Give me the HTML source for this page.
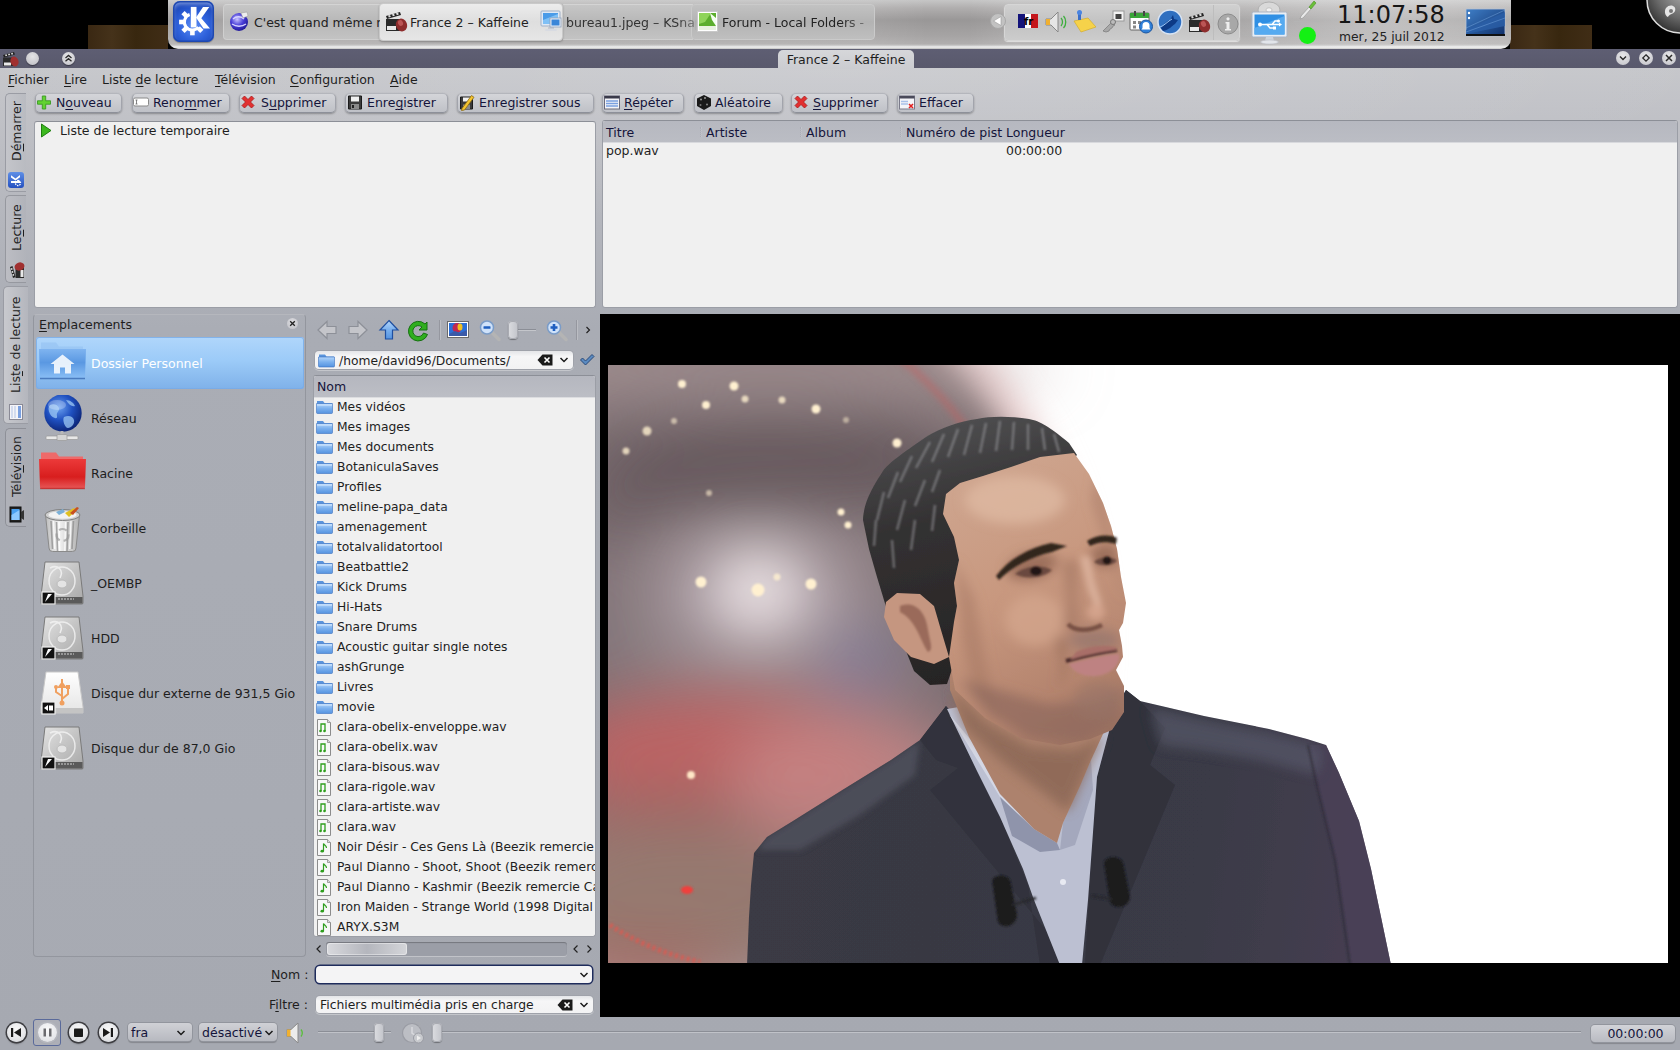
<!DOCTYPE html>
<html lang="fr">
<head>
<meta charset="utf-8">
<title>France 2 – Kaffeine</title>
<style>
html,body{margin:0;padding:0}
body{width:1680px;height:1050px;position:relative;overflow:hidden;background:#000;
 font-family:"DejaVu Sans","Liberation Sans",sans-serif;font-size:12.5px;color:#1e1e1e;line-height:16px}
.a{position:absolute}
u{text-decoration:underline;text-underline-offset:2px;text-decoration-thickness:1px}
#win{left:0;top:68px;width:1680px;height:982px;
 background:radial-gradient(ellipse 900px 160px at 840px 0,rgba(255,255,255,.12),rgba(255,255,255,0)),linear-gradient(#c6c7cb 0,#c1c2c7 40px,#b3b5bc 160px,#a9acb4 260px,#a6a9b1 100%)}
#title{left:0;top:49px;width:1680px;height:19px;background:linear-gradient(#5e5e73,#59596c)}
.wood{background:linear-gradient(90deg,#3a2813,#45321a 30%,#38270f 60%,#402d16)}
#panel{left:168px;top:0;width:1343px;height:49px;border-radius:0 0 10px 10px;
 background:radial-gradient(ellipse 160px 40px at 1220px 20px,rgba(255,255,255,.28),rgba(255,255,255,0)),linear-gradient(90deg,rgba(255,255,255,.12) 0,rgba(255,255,255,.08) 700px,rgba(255,255,255,0) 760px,rgba(255,255,255,0) 800px,rgba(255,255,255,.1) 850px,rgba(255,255,255,.18) 100%),linear-gradient(#c6c6c6 0,#b0aeae 8px,#999797 20px,#a6a4a4 36px,#b0aeae 44px,#c8c8c8 45.500px,#f0f0f0 47px,#d8d8d8 48px,#b8b8b8 49px)}
.btn{height:18px;border-radius:5px;border:1px solid #a2a4ac;border-top-color:#b4b6bc;border-bottom-color:#8d9099;
 background:linear-gradient(#d4d5d9,#bfc1c7);box-shadow:0 1px 2px rgba(0,0,0,.3);color:#14143a}
.btn span{position:absolute;top:1px;white-space:nowrap}
.view{background:#f0f0f0;border:1px solid #9b9ea6;border-top-color:#8c8f97;border-radius:3px;box-sizing:border-box}
.row{position:absolute;left:0;white-space:nowrap;height:20px;line-height:20px;font-size:12.3px}
.vt{position:absolute;white-space:nowrap;transform-origin:0 0;transform:rotate(-90deg);font-size:12.5px;color:#1e1e1e}
</style>
</head>
<body>
<!-- DESKTOP TOP -->
<div class="a wood" style="left:88px;top:25px;width:80px;height:24px"></div>
<div class="a wood" style="left:1510px;top:25px;width:82px;height:24px"></div>
<div id="panel" class="a"></div>

<!-- PANEL CONTENT -->
<div class="a" style="left:173px;top:1px;width:41px;height:41px;border-radius:7px;background:radial-gradient(ellipse 60% 55% at 50% 62%,#5f8ff4,#2f62dc 60%,#1f4cc0);box-shadow:inset 0 0 0 1.500px #1e48b0,inset 0 3px 4px rgba(255,255,255,.45),0 1px 1px rgba(0,0,0,.3)">
<svg class="a" style="left:0;top:0" width="41" height="41" viewBox="0 0 41 41"><g fill="#fff"><path d="M17.800 5.900h5.700v20.500h-5.700z"/><path d="M23 16.500L30 6h6.300l-8 11.200 8.700 10.300h-6.500z"/><path d="M16.660 13.480A8 8 0 1 0 25.530 26.140" fill="none" stroke="#fff" stroke-width="3"/><g transform="translate(19.400 21)"><rect x="-2.300" y="-13.300" width="4.600" height="5" transform="rotate(-45)"/><rect x="-2.300" y="-13.300" width="4.600" height="5" transform="rotate(-90)"/><rect x="-2.300" y="-13.300" width="4.600" height="5" transform="rotate(-135)"/><rect x="-2.300" y="-13.300" width="4.600" height="5" transform="rotate(180)"/><rect x="-2.300" y="-13.300" width="4.600" height="5" transform="rotate(135)"/></g></g></svg></div>
<div class="a" style="left:223px;top:4px;width:159px;height:36px;border-radius:4px 0 0 4px;background:linear-gradient(#c6c6c6,#b7b7b7 50%,#c3c3c3);border:1px solid #cfcfcf;border-top-color:#d4d4d4;box-sizing:border-box"></div>
<div class="a" style="left:563px;top:4px;width:130px;height:36px;background:linear-gradient(#c6c6c6,#b7b7b7 50%,#c3c3c3);border:1px solid #cfcfcf;border-top-color:#d4d4d4;border-left:0;box-sizing:border-box"></div>
<div class="a" style="left:691px;top:4px;width:184px;height:36px;border-radius:4px;background:linear-gradient(#c2c2c2,#b3b3b3 50%,#bfbfbf);border:1px solid #cacaca;box-sizing:border-box"></div>
<div class="a" style="left:379px;top:3px;width:184px;height:38px;border-radius:4px;background:linear-gradient(#ececec,#dedede 50%,#e6e6e6);border:1px solid #c9c9c9;box-sizing:border-box;box-shadow:0 1px 2px rgba(0,0,0,.25)"></div>
<!-- task icons -->
<svg class="a" style="left:229px;top:10px" width="22" height="22" viewBox="0 0 22 22"><defs><radialGradient id="gl" cx=".4" cy=".35" r=".7"><stop offset="0" stop-color="#c9c4ff"/><stop offset=".5" stop-color="#4a3fd8"/><stop offset="1" stop-color="#1d1690"/></radialGradient></defs><circle cx="10" cy="12" r="9" fill="url(#gl)"/><path d="M4 9c3-3 8-3 11 0M3 14c4 3 10 3 14 0" stroke="#d8d4ff" stroke-width="1.300" fill="none"/><path d="M12 3l6-1 1 4-5 2z" fill="#eee" stroke="#999" stroke-width=".5"/></svg>
<svg class="a" style="left:384px;top:9px" width="24" height="24" viewBox="0 0 24 24"><path d="M2 7l14-4 1 3-14 4z" fill="#222"/><path d="M4 6.500l2-.600.800 2-2 .600zM8 5.300l2-.600.800 2-2 .600zM12 4.200l2-.600.800 2-2 .600z" fill="#ddd"/><rect x="2" y="10" width="15" height="12" fill="#2a2a2a"/><rect x="3" y="17" width="9" height="4" fill="#e8e8e8"/><ellipse cx="17.500" cy="16" rx="5.500" ry="6.500" transform="rotate(-20 17.500 16)" fill="#8e2d2d"/><ellipse cx="16.500" cy="14" rx="2.500" ry="3" transform="rotate(-20 16.500 14)" fill="#b55"/></svg>
<svg class="a" style="left:540px;top:9px" width="23" height="24" viewBox="0 0 23 24"><rect x="1" y="2" width="19" height="15" rx="1" fill="#dfe8f4" stroke="#9fb0c8"/><rect x="3" y="4" width="15" height="11" fill="#4a9be8"/><path d="M3 11l15-6v10H3z" fill="#7fc0f6"/><rect x="8" y="17" width="6" height="3" fill="#c8ccd4"/><rect x="5" y="20" width="12" height="2" rx="1" fill="#d8dbe2"/><rect x="10" y="9" width="11" height="9" fill="#e8eef8" stroke="#8fa0b8" stroke-width=".8"/><rect x="11.500" y="10.500" width="8" height="6" fill="#3b86d8"/></svg>
<svg class="a" style="left:697px;top:11px" width="21" height="21" viewBox="0 0 21 21"><rect x=".5" y=".5" width="20" height="20" fill="#fff" stroke="#c8c8c8"/><rect x="2" y="2" width="17" height="13" fill="#5cae2e"/><path d="M2 2h12l-6 9-6 2z" fill="#8fd45a"/><path d="M13 2l6 5v8l-4-6z" fill="#f4fff0"/><rect x="2" y="15" width="17" height="4" fill="#e8f2e0"/></svg>
<div class="a" style="left:254px;top:15px;width:126px;overflow:hidden;white-space:nowrap;color:#222">C'est quand même mieux</div>
<div class="a" style="left:410px;top:15px;white-space:nowrap;color:#222">France 2 – Kaffeine</div>
<div class="a" style="left:566px;top:15px;width:130px;overflow:hidden;white-space:nowrap;color:#333;-webkit-mask-image:linear-gradient(90deg,#000 85%,rgba(0,0,0,.4))">bureau1.jpeg – KSnapshot</div>
<div class="a" style="left:722px;top:15px;width:148px;overflow:hidden;white-space:nowrap;color:#222;-webkit-mask-image:linear-gradient(90deg,#000 80%,rgba(0,0,0,.3))">Forum - Local Folders - </div>
<!-- systray -->
<div class="a" style="left:1004px;top:4px;width:236px;height:37px;border-radius:4px;background:linear-gradient(#d0d0d0,#c2c2c2 50%,#cccccc);border:1px solid #d6d6d6;box-sizing:border-box;box-shadow:0 1px 1px rgba(255,255,255,.6)"></div>
<div class="a" style="left:1213px;top:5px;width:1px;height:35px;background:#bdbdbd"></div>
<svg class="a" style="left:989px;top:12px" width="18" height="18" viewBox="0 0 18 18"><circle cx="9" cy="9" r="7.500" fill="#c2c2c2" stroke="#a8a8a8"/><path d="M12 4.500v9L4.500 9z" fill="#fff" stroke="#999" stroke-width=".6"/></svg>
<svg class="a" style="left:1018px;top:14px" width="20" height="14" viewBox="0 0 20 14"><rect width="7" height="14" fill="#14147a"/><rect x="7" width="6" height="14" fill="#fff"/><rect x="13" width="7" height="14" fill="#c4161c"/><text x="6" y="11" font-size="10" font-weight="bold" font-family="DejaVu Sans,sans-serif" fill="#000">fr</text></svg>
<svg class="a" style="left:1044px;top:10px" width="24" height="24" viewBox="0 0 24 24"><path d="M2 9h5l7-7v20l-7-7H2z" fill="#e6e6e6" stroke="#888" stroke-width="1"/><rect x="2" y="9" width="4" height="6" fill="#f0b030"/><path d="M17 8c2 2 2 6 0 8M19.500 6c3 3 3 9 0 12" stroke="#3cae3c" stroke-width="1.300" fill="none"/></svg>
<svg class="a" style="left:1073px;top:9px" width="24" height="24" viewBox="0 0 24 24"><path d="M1 12l14-3 8 9-15 5z" fill="#f6d24a" stroke="#d0a820" stroke-width=".6"/><path d="M5 3h3v8H5z" fill="#3a6ec8"/><circle cx="6.500" cy="3.500" r="2.500" fill="#4a84e0"/></svg>
<svg class="a" style="left:1101px;top:10px" width="24" height="24" viewBox="0 0 24 24"><rect x="12" y="1" width="11" height="10" fill="#f2f2f2" stroke="#999"/><rect x="14.500" y="4" width="6" height="5" fill="#444"/><path d="M2 21l9-9 3 3-2 1-1 2-2 1-1 2-3 1z" fill="#a8a8a8" stroke="#777" stroke-width=".7"/><circle cx="12" cy="12" r="2.500" fill="#bbb" stroke="#777"/></svg>
<svg class="a" style="left:1129px;top:10px" width="24" height="24" viewBox="0 0 24 24"><rect x="1" y="3" width="19" height="17" rx="1" fill="#fff" stroke="#666"/><rect x="1" y="3" width="19" height="5" fill="#3aa53a"/><rect x="5" y="1" width="2" height="5" fill="#444"/><rect x="14" y="1" width="2" height="5" fill="#444"/><path d="M4 11h3v3H4zM9 11h3v3H9zM4 15.500h3v3H4z" fill="#888"/><circle cx="17" cy="16.500" r="6.500" fill="#2f7fd8" stroke="#1a55a0"/><path d="M17 12a3.500 3.500 0 0 1 3.500 3.500V18l1 1.500h-9l1-1.500v-2.500A3.500 3.500 0 0 1 17 12z" fill="#fff"/></svg>
<svg class="a" style="left:1157px;top:9px" width="26" height="26" viewBox="0 0 26 26"><circle cx="13" cy="13" r="12" fill="#2f6fc0" stroke="#d8e4f4" stroke-width="1.500"/><path d="M4 19c3-3 5-7 9-8l3-5 1 4 4 1-3 4c-3 2-6 6-12 7z" fill="#0d3a86"/><path d="M3 18c4-1 8-6 12-8" stroke="#9cc4f4" stroke-width="1" fill="none"/></svg>
<svg class="a" style="left:1187px;top:10px" width="24" height="24" viewBox="0 0 24 24"><path d="M2 7l14-4 1 3-14 4z" fill="#222"/><path d="M4 6.500l2-.600.800 2-2 .600zM8 5.300l2-.600.800 2-2 .600zM12 4.200l2-.600.800 2-2 .600z" fill="#ddd"/><rect x="2" y="10" width="15" height="12" fill="#2a2a2a"/><rect x="3" y="17" width="9" height="4" fill="#e8e8e8"/><ellipse cx="17.500" cy="16" rx="5.500" ry="6.500" transform="rotate(-20 17.500 16)" fill="#8e2d2d"/><ellipse cx="16.500" cy="14" rx="2.500" ry="3" transform="rotate(-20 16.500 14)" fill="#b55"/></svg>
<svg class="a" style="left:1217px;top:13px" width="22" height="22" viewBox="0 0 22 22"><circle cx="11" cy="11" r="10" fill="#a8a8a8" stroke="#8c8c8c"/><circle cx="11" cy="5.800" r="1.600" fill="#eee"/><path d="M8.500 9h4v7h1.500v1.500h-6V16h1.500v-5.500H8.500z" fill="#eee"/></svg>
<!-- device notifier -->
<svg class="a" style="left:1250px;top:1px" width="40" height="44" viewBox="0 0 40 44"><ellipse cx="19" cy="9" rx="11" ry="8" fill="#d9d9d9" stroke="#b0b0b0"/><ellipse cx="19" cy="9" rx="3" ry="2.200" fill="#f4f4f4" stroke="#aaa" stroke-width=".6"/><rect x="2" y="11" width="35" height="25" rx="1.500" fill="#e9eef5" stroke="#aab4c4"/><rect x="4.500" y="13.500" width="30" height="20" fill="#2f8fe4"/><path d="M4.500 27l30-12v18.500h-30z" fill="#56aaf0"/><path d="M10 23.500h19M22 23.500l3-3.500h3M17 23.500l3 3.500h3" stroke="#fff" stroke-width="1.400" fill="none"/><circle cx="10" cy="23.500" r="2" fill="#fff"/><path d="M29 21.500l3 2-3 2z" fill="#fff"/><rect x="23" y="25.500" width="3" height="3" fill="#fff"/><circle cx="28.500" cy="20" r="1.500" fill="#fff"/><path d="M16 36h7l1 4h-9z" fill="#cfd3da"/><ellipse cx="19.500" cy="41" rx="9" ry="2" fill="#e2e5ea" stroke="#b8bcc4" stroke-width=".6"/></svg>
<svg class="a" style="left:1298px;top:0" width="20" height="20" viewBox="0 0 20 20"><path d="M3 16l8-9 2 2-8 9-3 1z" fill="#e8e8e8" stroke="#999" stroke-width=".7"/><path d="M11 7l5-6 2 2-5 6z" fill="#6bbf3a" stroke="#4a9020" stroke-width=".6"/></svg>
<div class="a" style="left:1299px;top:27px;width:17px;height:17px;border-radius:50%;background:#14f014"></div>
<div class="a" style="left:1294px;top:21px;width:26px;height:1px;background:#b4b4b4"></div>
<!-- clock -->
<div class="a" style="left:1337px;top:0px;font-size:24px;line-height:30px;color:#161616;white-space:nowrap">11:07:58</div>
<div class="a" style="left:1339px;top:29px;font-size:12.35px;line-height:16px;color:#222;white-space:nowrap">mer, 25 juil 2012</div>
<svg class="a" style="left:1465px;top:8px" width="42" height="30" viewBox="0 0 42 30"><defs><linearGradient id="dk" x1="0" y1="0" x2="1" y2="1"><stop offset="0" stop-color="#3f7fc8"/><stop offset="1" stop-color="#0f2f6a"/></linearGradient></defs><rect x="1" y="1" width="39" height="27" fill="url(#dk)" stroke="#b8c4d4" stroke-width=".8"/><path d="M1 22L40 4v14L1 26z" fill="#2a5fa8" opacity=".8"/><path d="M1 20L40 2M1 24L40 10" stroke="#7fb0e8" stroke-width=".6" opacity=".7"/><rect x="1" y="26" width="39" height="2" fill="#111"/><circle cx="4" cy="5" r="1.200" fill="#fff"/><circle cx="4" cy="10" r="1.200" fill="#fff"/></svg>
<!-- cashew -->
<svg class="a" style="left:1644px;top:0" width="36" height="36" viewBox="0 0 36 36"><defs><radialGradient id="cw" cx=".6" cy=".3" r=".8"><stop offset="0" stop-color="#bdbdbd"/><stop offset=".6" stop-color="#6a6a6a"/><stop offset="1" stop-color="#222"/></radialGradient></defs><circle cx="36" cy="0" r="33" fill="url(#cw)" stroke="#ddd" stroke-width="1.500"/><path d="M22 8c4-5 11-2 9 3-1 3-6 3-7 6-3-1-4-6-2-9z" fill="#e6e6e6"/><circle cx="27" cy="11" r="2" fill="#777"/></svg>
<!-- TITLE BAR -->
<div id="title" class="a"></div>
<!-- WINDOW -->
<div id="win" class="a"></div>

<!-- TITLEBAR CONTENT -->
<svg class="a" style="left:2px;top:50px" width="18" height="17" viewBox="0 0 18 17"><path d="M1 5l11-3 1 2.500-11 3z" fill="#222"/><path d="M3 4.800l1.600-.500.600 1.500-1.600.500zM6 4l1.600-.500.600 1.500-1.600.500zM9 3.200l1.600-.500.600 1.500-1.600.500z" fill="#ddd"/><rect x="1" y="7.500" width="11" height="8.500" fill="#2a2a2a"/><rect x="2" y="12.500" width="7" height="3" fill="#e8e8e8"/><ellipse cx="12.500" cy="11.500" rx="4" ry="5" transform="rotate(-20 12.500 11.500)" fill="#a03030"/></svg>
<div class="a" style="left:26px;top:52px;width:13px;height:13px;border-radius:50%;background:radial-gradient(circle at 50% 35%,#e4e4e6,#bcbcc2);box-shadow:0 1px 1px rgba(0,0,0,.4)"></div>
<div class="a" style="left:62px;top:52px;width:13px;height:13px;border-radius:50%;background:radial-gradient(circle at 50% 35%,#e8e8ea,#c2c2c8);box-shadow:0 1px 1px rgba(0,0,0,.4)"></div>
<svg class="a" style="left:61px;top:51px" width="15" height="15" viewBox="0 0 15 15"><path d="M4.500 7l3-2.600 3 2.600M4.500 10.300l3-2.600 3 2.600" stroke="#2a2a2a" stroke-width="1.300" fill="none"/></svg>
<div class="a" style="left:778px;top:50px;width:136px;height:19px;border-radius:5px 5px 0 0;background:linear-gradient(#d6d7da,#cbccd0);text-align:center;line-height:19px;color:#1e1e1e">France 2 – Kaffeine</div>
<div class="a" style="left:1616px;top:51px;width:14px;height:14px;border-radius:50%;background:radial-gradient(circle at 50% 35%,#e8e8ea,#c2c2c8)"></div>
<div class="a" style="left:1639px;top:51px;width:14px;height:14px;border-radius:50%;background:radial-gradient(circle at 50% 35%,#e8e8ea,#c2c2c8)"></div>
<div class="a" style="left:1662px;top:51px;width:14px;height:14px;border-radius:50%;background:radial-gradient(circle at 50% 35%,#e8e8ea,#c2c2c8)"></div>
<svg class="a" style="left:1616px;top:51px" width="60" height="14" viewBox="0 0 60 14"><path d="M4 5.500l3 3 3-3" stroke="#2a2a2a" stroke-width="1.400" fill="none"/><path d="M30 3.800l3.200 3.200-3.200 3.200-3.200-3.200z" stroke="#2a2a2a" stroke-width="1.300" fill="none"/><path d="M50 4l6 6M56 4l-6 6" stroke="#2a2a2a" stroke-width="1.500" fill="none"/></svg>
<!-- MENUBAR -->
<div class="a" style="left:8px;top:72px;white-space:nowrap"><u>F</u>ichier</div>
<div class="a" style="left:64px;top:72px;white-space:nowrap"><u>L</u>ire</div>
<div class="a" style="left:102px;top:72px;white-space:nowrap">Liste <u>d</u>e lecture</div>
<div class="a" style="left:215px;top:72px;white-space:nowrap"><u>T</u>élévision</div>
<div class="a" style="left:290px;top:72px;white-space:nowrap"><u>C</u>onfiguration</div>
<div class="a" style="left:390px;top:72px;white-space:nowrap"><u>A</u>ide</div>
<!-- TOOLBAR -->
<div class="a btn" style="left:35px;top:93px;width:85px"><svg class="a" style="left:0px;top:0px" width="16" height="17" viewBox="0 0 16 16"><path d="M6.300 1.500h3.400v4.800h4.800v3.400H9.700v4.800H6.300V9.700H1.500V6.300h4.800z" fill="#62d232" stroke="#3a9a22" stroke-width=".9"/></svg><span style="left:20px">N<u>o</u>uveau</span></div>
<div class="a btn" style="left:132px;top:93px;width:96px"><svg class="a" style="left:0px;top:0px" width="16" height="17" viewBox="0 0 16 16"><rect x=".5" y="3.500" width="15" height="8" rx="1.500" fill="#fff" stroke="#8a8a8a"/><path d="M3.500 5.500v4M2.500 5.500h2M2.500 9.500h2" stroke="#666" stroke-width=".8"/></svg><span style="left:20px">Reno<u>m</u>mer</span></div>
<div class="a btn" style="left:239px;top:93px;width:95px"><svg class="a" style="left:0px;top:0px" width="16" height="17" viewBox="0 0 16 16"><path d="M2 4l2.500-2.500L8 5l3.500-3.500L14 4l-3.500 3.500L14 11l-2.500 2.500L8 10l-3.500 3.500L2 11l3.500-3.500z" fill="#e23030" stroke="#a81818" stroke-width=".8"/></svg><span style="left:21px">S<u>u</u>pprimer</span></div>
<div class="a btn" style="left:345px;top:93px;width:101px"><svg class="a" style="left:1px;top:0px" width="16" height="17" viewBox="0 0 16 16"><path d="M1.500 1.500h13v13h-13z" fill="#3a3a3a" stroke="#1a1a1a"/><rect x="4" y="2" width="8" height="5" fill="#f0f0f0"/><rect x="4" y="9.500" width="8" height="5" fill="#8a8a8a"/><rect x="5" y="10.500" width="2" height="3" fill="#222"/></svg><span style="left:21px">Enre<u>g</u>istrer</span></div>
<div class="a btn" style="left:457px;top:93px;width:135px"><svg class="a" style="left:1px;top:0px" width="16" height="17" viewBox="0 0 16 16"><path d="M1.500 2.500h12v12h-12z" fill="#3a3a3a" stroke="#1a1a1a"/><rect x="4" y="3" width="7" height="4" fill="#f0f0f0"/><rect x="4" y="10" width="7" height="4.500" fill="#8a8a8a"/><path d="M3 14L12.500 1l2.500 1.800L5.500 15.500l-3 .5z" fill="#f4c430" stroke="#8a6a10" stroke-width=".8"/></svg><span style="left:21px">Enregistrer sous</span></div>
<div class="a btn" style="left:602px;top:93px;width:80px"><svg class="a" style="left:1px;top:0px" width="16" height="17" viewBox="0 0 16 16"><rect x=".5" y="1.500" width="15" height="13" fill="#f4f4f8" stroke="#6a6a7a"/><rect x=".5" y="1.500" width="15" height="2.500" fill="#3a3a4a"/><path d="M2 6.500h12M2 9h12M2 11.500h12" stroke="#7aa0e0" stroke-width="1.500"/></svg><span style="left:21px"><u>R</u>épéter</span></div>
<div class="a btn" style="left:694px;top:93px;width:87px"><svg class="a" style="left:1px;top:0px" width="16" height="17" viewBox="0 0 16 16"><path d="M8 .5l7 3.500v7.500L8 15.500 1 11.500V4z" fill="#1a1a1a"/><circle cx="5" cy="5" r="1" fill="#999"/><circle cx="11" cy="10" r="1" fill="#888"/><circle cx="4.500" cy="10.500" r="1" fill="#777"/><circle cx="9" cy="3.500" r=".9" fill="#aaa"/></svg><span style="left:20px">Aléatoire</span></div>
<div class="a btn" style="left:791px;top:93px;width:95px"><svg class="a" style="left:1px;top:0px" width="16" height="17" viewBox="0 0 16 16"><path d="M2 4l2.500-2.500L8 5l3.500-3.500L14 4l-3.500 3.500L14 11l-2.500 2.500L8 10l-3.500 3.500L2 11l3.500-3.500z" fill="#e23030" stroke="#a81818" stroke-width=".8"/></svg><span style="left:21px"><u>S</u>upprimer</span></div>
<div class="a btn" style="left:897px;top:93px;width:75px"><svg class="a" style="left:1px;top:0px" width="16" height="17" viewBox="0 0 16 16"><rect x=".5" y="1.500" width="15" height="13" fill="#f4f4f8" stroke="#7a7a8a"/><rect x=".5" y="1.500" width="15" height="2.500" fill="#4a4a5a"/><path d="M2 7h7M2 9.500h7" stroke="#a8c0e8" stroke-width="1.300"/><path d="M10 9.500l4 4M14 9.500l-4 4" stroke="#e02020" stroke-width="1.600"/></svg><span style="left:21px">Effacer</span></div>

<!-- LEFT TABS -->
<div class="a" style="left:5px;top:93px;width:21px;height:99px;border-radius:5px 0 0 5px;background:linear-gradient(90deg,#c4c5ca,#b9bbc1);border:1px solid #9a9ca4;border-right:0;box-sizing:border-box"></div>
<div class="a" style="left:5px;top:195px;width:21px;height:88px;border-radius:5px 0 0 5px;background:linear-gradient(90deg,#bcbdc3,#b1b3ba);border:1px solid #96989f;border-right:0;box-sizing:border-box"></div>
<div class="a" style="left:3px;top:286px;width:25px;height:138px;border-radius:5px 0 0 5px;background:linear-gradient(90deg,#c8c9ce,#b4b6bd);border:1px solid #9a9ca4;border-right:0;box-sizing:border-box"></div>
<div class="a" style="left:5px;top:428px;width:21px;height:99px;border-radius:5px 0 0 5px;background:linear-gradient(90deg,#b0b2b9,#a9abb3);border:1px solid #8e9098;border-right:0;box-sizing:border-box"></div>
<div class="vt" style="left:9px;top:161px">D<u>é</u>marrer</div>
<div class="vt" style="left:9px;top:251px">Le<u>c</u>ture</div>
<div class="vt" style="left:8px;top:393px">Lis<u>t</u>e de lecture</div>
<div class="vt" style="left:9px;top:497px">Télé<u>v</u>ision</div>
<div class="a" style="left:8px;top:172px;width:16px;height:16px;border-radius:3px;background:linear-gradient(#5f8fe6,#2450c0)"></div>
<svg class="a" style="left:8px;top:172px" width="16" height="16" viewBox="0 0 16 16"><g fill="#fff" transform="rotate(-90 8 8)"><path d="M5 3h2v9H5z"/><path d="M7.500 7.500l3-4.500h2.200l-3.200 4.500 3.500 4.500h-2.300z"/><circle cx="5" cy="10" r="2.600" fill="none" stroke="#fff" stroke-width="1.200" stroke-dasharray="1.500 1"/></g></svg>
<svg class="a" style="left:8px;top:262px" width="17" height="17" viewBox="0 0 17 17"><g transform="rotate(-90 8.500 8.500)"><path d="M1 5l11-3 1 2.500-11 3z" fill="#222"/><path d="M3 4.800l1.600-.500.600 1.500-1.600.500zM6 4l1.600-.500.600 1.500-1.600.500zM9 3.200l1.600-.500.600 1.500-1.600.500z" fill="#ddd"/><rect x="1" y="7.500" width="11" height="8.500" fill="#2a2a2a"/><rect x="2" y="12.500" width="7" height="3" fill="#e8e8e8"/><ellipse cx="12.500" cy="11.500" rx="4" ry="5" transform="rotate(-20 12.500 11.500)" fill="#a03030"/></g></svg>
<svg class="a" style="left:9px;top:404px" width="15" height="17" viewBox="0 0 15 17"><rect x=".5" y=".5" width="13" height="15" fill="#f4f4f8" stroke="#8a8a96"/><rect x="9" y="2" width="3" height="12" fill="#7aa0e0"/><path d="M3 2v12M6 2v12" stroke="#c8d4ec" stroke-width="1.500"/></svg>
<svg class="a" style="left:9px;top:506px" width="16" height="18" viewBox="0 0 16 18"><rect x="1" y="1" width="11" height="15" fill="#222" stroke="#111"/><rect x="2.500" y="3" width="8" height="11" fill="#4aa0f0"/><path d="M2.500 9l8-5v10h-8z" fill="#8cc8ff"/><path d="M12 6l3-2v10l-3-2z" fill="#333"/></svg>
<!-- PLAYLIST TREE -->
<div class="a view" style="left:34px;top:121px;width:562px;height:187px"></div>
<svg class="a" style="left:40px;top:123px" width="12" height="15" viewBox="0 0 12 15"><path d="M1.500 1l9.500 6.500L1.500 14z" fill="#3cb81e" stroke="#1f7f10" stroke-width="1"/></svg>
<div class="a" style="left:60px;top:123px;white-space:nowrap">Liste de lecture temporaire</div>
<!-- TABLE -->
<div class="a view" style="left:602px;top:120px;width:1076px;height:188px;overflow:hidden">
<div class="a" style="left:0;top:0;width:1076px;height:21px;background:linear-gradient(#b6b8c0,#bbbdc4);border-bottom:1px solid #d8d9dd"></div>
<div class="a" style="left:97px;top:6px;width:2px;height:10px;border-left:1px dotted #a6a8b1;border-right:1px dotted #c8c9cf;box-sizing:border-box;opacity:.7"></div>
<div class="a" style="left:197px;top:6px;width:2px;height:10px;border-left:1px dotted #a6a8b1;border-right:1px dotted #c8c9cf;box-sizing:border-box;opacity:.7"></div>
<div class="a" style="left:297px;top:6px;width:2px;height:10px;border-left:1px dotted #a6a8b1;border-right:1px dotted #c8c9cf;box-sizing:border-box;opacity:.7"></div></div>
<div class="a" style="left:606px;top:125px;white-space:nowrap;color:#14143a">Titre</div>
<div class="a" style="left:706px;top:125px;white-space:nowrap;color:#14143a">Artiste</div>
<div class="a" style="left:806px;top:125px;white-space:nowrap;color:#14143a">Album</div>
<div class="a" style="left:906px;top:125px;white-space:nowrap;color:#14143a">Numéro de pist</div>
<div class="a" style="left:1006px;top:125px;white-space:nowrap;color:#14143a">Longueur</div>
<div class="a" style="left:606px;top:143px;white-space:nowrap">pop.wav</div>
<div class="a" style="left:1006px;top:143px;white-space:nowrap">00:00:00</div>
<svg width="0" height="0" class="a"><defs>
<linearGradient id="fb" x1="0" y1="0" x2="0" y2="1"><stop offset="0" stop-color="#7fb4f0"/><stop offset=".45" stop-color="#5a98e2"/><stop offset="1" stop-color="#8cc0f6"/></linearGradient>
<linearGradient id="fr" x1="0" y1="0" x2="0" y2="1"><stop offset="0" stop-color="#ec3a3a"/><stop offset=".6" stop-color="#d81e1e"/><stop offset="1" stop-color="#e85a5a"/></linearGradient>
<linearGradient id="hd" x1="0" y1="0" x2="1" y2="1"><stop offset="0" stop-color="#e4e4e4"/><stop offset=".5" stop-color="#c4c4c4"/><stop offset="1" stop-color="#a8a8a8"/></linearGradient>
<linearGradient id="ub" x1="0" y1="0" x2="0" y2="1"><stop offset="0" stop-color="#ffffff"/><stop offset="1" stop-color="#e4e4e4"/></linearGradient>
<radialGradient id="gb" cx=".4" cy=".35" r=".7"><stop offset="0" stop-color="#6aa0f0"/><stop offset=".5" stop-color="#1f50c0"/><stop offset="1" stop-color="#0a2070"/></radialGradient>
<linearGradient id="tr" x1="0" y1="0" x2="1" y2="0"><stop offset="0" stop-color="#bcbcbc"/><stop offset=".4" stop-color="#f2f2f2"/><stop offset="1" stop-color="#b0b0b0"/></linearGradient>
<linearGradient id="sf" x1="0" y1="0" x2="0" y2="1"><stop offset="0" stop-color="#b4d6fa"/><stop offset=".5" stop-color="#7ab0ee"/><stop offset="1" stop-color="#5593e0"/></linearGradient>
</defs></svg>
<!-- PLACES PANEL -->
<div class="a" style="left:33px;top:314px;width:273px;height:643px;border:1px solid #93969e;border-top-color:#b5b7bd;border-radius:4px;box-sizing:border-box;background:rgba(255,255,255,.02)"></div>
<div class="a" style="left:39px;top:317px;white-space:nowrap"><u>E</u>mplacements</div>
<div class="a" style="left:287px;top:318px;width:11px;height:11px;border-radius:50%;background:radial-gradient(circle at 50% 35%,#dcdce0,#bfc0c6)"></div>
<svg class="a" style="left:287px;top:318px" width="11" height="11" viewBox="0 0 11 11"><path d="M3.200 3.200l4.600 4.600M7.800 3.200l-4.600 4.600" stroke="#222" stroke-width="1.300"/></svg>
<div class="a" style="left:36px;top:337px;width:268px;height:52px;border-radius:3px;background:linear-gradient(#b0d6fb,#9ccbf8 45%,#7fb1e9);box-shadow:inset 0 0 0 1px rgba(120,170,230,.8)"></div>
<div class="a" style="left:38px;top:340px;width:48px;height:48px"><svg width="48" height="48" viewBox="0 0 48 48"><path d="M3 2.500h15l3 4h24v8H3z" fill="#8ab8ee" opacity=".4"/><path d="M1 9h47l-1 28a2 2 0 0 1-2 2H4a2 2 0 0 1-2-2z" fill="url(#fb)"/><path d="M2 38.500h45" stroke="#2f5fa8" stroke-width="1.500" opacity=".7"/><path d="M24.500 14.500l-12 9.500h3.500v9.500h6v-6h5v6h6V24H36.500z" fill="#fff" opacity=".85"/></svg></div>
<div class="a" style="left:91px;top:356px;white-space:nowrap;color:#fff">Dossier Personnel</div>
<div class="a" style="left:38px;top:395px;width:48px;height:48px"><svg width="48" height="48" viewBox="0 0 48 48"><circle cx="25" cy="18" r="18.700" fill="url(#gb)"/><path d="M12 10c4-2 8 0 9 3s-3 4-2 8-5 2-7-2 -2-7 0-9zM26 22c4-2 9-1 10 3s-3 8-6 8-6-8-4-11zM28 5c4 0 8 3 9 6-3 1-6-1-9-6z" fill="#9cc8f4" opacity=".75"/><ellipse cx="19" cy="10" rx="9" ry="5" fill="#fff" opacity=".25"/><rect x="22.500" y="36" width="3" height="6" fill="#b8b8b8"/><rect x="8" y="41" width="32" height="3.500" rx="1" fill="#e8e8e8" stroke="#999" stroke-width=".7"/><rect x="19" y="39.500" width="10" height="6" rx="1" fill="#d4d4d4" stroke="#999" stroke-width=".7"/></svg></div>
<div class="a" style="left:91px;top:411px;white-space:nowrap;color:#1e1e1e">Réseau</div>
<div class="a" style="left:38px;top:450px;width:48px;height:48px"><svg width="48" height="48" viewBox="0 0 48 48"><path d="M3 2.500h15l3 4h24v8H3z" fill="#ee6a6a"/><path d="M1 9h47l-1 28a2 2 0 0 1-2 2H4a2 2 0 0 1-2-2z" fill="url(#fr)"/><path d="M2 38.500h45" stroke="#b02020" stroke-width="1.500" opacity=".6"/></svg></div>
<div class="a" style="left:91px;top:466px;white-space:nowrap;color:#1e1e1e">Racine</div>
<div class="a" style="left:38px;top:505px;width:48px;height:48px"><svg width="48" height="48" viewBox="0 0 48 48"><path d="M7.500 10h34l-3.500 33a3.500 3.500 0 0 1-3.500 3.500H14.500a3.500 3.500 0 0 1-3.500-3.500z" fill="url(#tr)" stroke="#8a8a8a"/><path d="M13 16l1.500 28M18.500 17l1 29M30 17l-1 29M35.500 16l-1.500 28" stroke="#8e8e8e" stroke-width="1.600" opacity=".75"/><path d="M15.500 16l1.300 28M21 17l.7 29M27.500 17l-.7 29M33 16l-1.300 28" stroke="#fff" stroke-width="1.400" opacity=".8"/><ellipse cx="24.500" cy="10" rx="17.500" ry="5.500" fill="#cfcfcf" stroke="#7e7e7e"/><ellipse cx="24.500" cy="10" rx="14" ry="3.800" fill="#f2f2f2"/><path d="M27 8l9-5 3 2-8 7z" fill="#e0c020"/><path d="M18 7l7-3 2 3-6 3z" fill="#7ab0d8"/><path d="M32 8l7-6 2 1-6 7z" fill="#c85020"/><circle cx="24.500" cy="30" r="6" fill="none" stroke="#9a9a9a" stroke-width="2.200" opacity=".7" stroke-dasharray="8 4"/></svg></div>
<div class="a" style="left:91px;top:521px;white-space:nowrap;color:#1e1e1e">Corbeille</div>
<div class="a" style="left:38px;top:560px;width:48px;height:48px"><svg width="48" height="48" viewBox="0 0 48 48"><path d="M7 2h34l4 34v7a1 1 0 0 1-1 1H4a1 1 0 0 1-1-1v-7z" fill="url(#hd)" stroke="#7a7a7a" stroke-width="1"/><path d="M3.500 37h41v6.500h-41z" fill="#5a5a5a"/><ellipse cx="24" cy="21" rx="13" ry="14" fill="none" stroke="#f4f4f4" stroke-width="1.500" opacity=".8"/><ellipse cx="24" cy="24" rx="5" ry="4" fill="#e4e4e4" stroke="#bbb"/><path d="M12 8c8-4 14 2 10 10" stroke="#eee" stroke-width="1.500" fill="none"/><path d="M20 39h16" stroke="#aaa" stroke-width="1.500" stroke-dasharray="2 1"/><rect x="4" y="32" width="13" height="12" fill="#111" stroke="#eee" stroke-width="1.200"/><path d="M7 42l7-8h-4z" fill="#fff"/></svg></div>
<div class="a" style="left:91px;top:576px;white-space:nowrap;color:#1e1e1e">_OEMBP</div>
<div class="a" style="left:38px;top:615px;width:48px;height:48px"><svg width="48" height="48" viewBox="0 0 48 48"><path d="M7 2h34l4 34v7a1 1 0 0 1-1 1H4a1 1 0 0 1-1-1v-7z" fill="url(#hd)" stroke="#7a7a7a" stroke-width="1"/><path d="M3.500 37h41v6.500h-41z" fill="#5a5a5a"/><ellipse cx="24" cy="21" rx="13" ry="14" fill="none" stroke="#f4f4f4" stroke-width="1.500" opacity=".8"/><ellipse cx="24" cy="24" rx="5" ry="4" fill="#e4e4e4" stroke="#bbb"/><path d="M12 8c8-4 14 2 10 10" stroke="#eee" stroke-width="1.500" fill="none"/><path d="M20 39h16" stroke="#aaa" stroke-width="1.500" stroke-dasharray="2 1"/><rect x="4" y="32" width="13" height="12" fill="#111" stroke="#eee" stroke-width="1.200"/><path d="M7 42l7-8h-4z" fill="#fff"/></svg></div>
<div class="a" style="left:91px;top:631px;white-space:nowrap;color:#1e1e1e">HDD</div>
<div class="a" style="left:38px;top:670px;width:48px;height:48px"><svg width="48" height="48" viewBox="0 0 48 48"><path d="M8 2h32l5 35v6H3v-6z" fill="url(#ub)" stroke="#c8c8c8" stroke-width="1"/><path d="M3 38h42v5H3z" fill="#c4c4c4"/><path d="M24 9v24M24 13l-3 4h6zM24 26l-6-4v-4M24 29l6-5v-5" stroke="#f0a060" stroke-width="2" fill="none"/><circle cx="24" cy="33" r="2.500" fill="#f0a060"/><rect x="28" y="15" width="4" height="4" fill="#f0a060"/><circle cx="18" cy="17" r="2" fill="#f0a060"/><rect x="4" y="32" width="13" height="12" fill="#111" stroke="#eee" stroke-width="1.200"/><path d="M6 38l4-3v6z" fill="#fff"/><rect x="11" y="35.500" width="4" height="5" fill="#fff"/></svg></div>
<div class="a" style="left:91px;top:686px;white-space:nowrap;color:#1e1e1e">Disque dur externe de 931,5 Gio</div>
<div class="a" style="left:38px;top:725px;width:48px;height:48px"><svg width="48" height="48" viewBox="0 0 48 48"><path d="M7 2h34l4 34v7a1 1 0 0 1-1 1H4a1 1 0 0 1-1-1v-7z" fill="url(#hd)" stroke="#7a7a7a" stroke-width="1"/><path d="M3.500 37h41v6.500h-41z" fill="#5a5a5a"/><ellipse cx="24" cy="21" rx="13" ry="14" fill="none" stroke="#f4f4f4" stroke-width="1.500" opacity=".8"/><ellipse cx="24" cy="24" rx="5" ry="4" fill="#e4e4e4" stroke="#bbb"/><path d="M12 8c8-4 14 2 10 10" stroke="#eee" stroke-width="1.500" fill="none"/><path d="M20 39h16" stroke="#aaa" stroke-width="1.500" stroke-dasharray="2 1"/><rect x="4" y="32" width="13" height="12" fill="#111" stroke="#eee" stroke-width="1.200"/><path d="M7 42l7-8h-4z" fill="#fff"/></svg></div>
<div class="a" style="left:91px;top:741px;white-space:nowrap;color:#1e1e1e">Disque dur de 87,0 Gio</div>

<!-- FILE BROWSER TOOLBAR -->
<svg class="a" style="left:316px;top:319px" width="22" height="22" viewBox="0 0 22 22"><path d="M2 11l9-8.500v5h9v7h-9v5z" fill="#c4c5ca" stroke="#8d9098" stroke-width="1.200"/></svg>
<svg class="a" style="left:347px;top:319px" width="22" height="22" viewBox="0 0 22 22"><path d="M20 11l-9-8.500v5H2v7h9v5z" fill="#c4c5ca" stroke="#8d9098" stroke-width="1.200"/></svg>
<svg class="a" style="left:378px;top:319px" width="22" height="22" viewBox="0 0 22 22"><path d="M11 1.500l9 9.500h-5.500v9h-7v-9H2z" fill="url(#sf)" stroke="#1f4fa0" stroke-width="1.200"/></svg>
<svg class="a" style="left:408px;top:318px" width="24" height="24" viewBox="0 0 24 24"><path d="M19 4v8h-8l3-3a5.500 5.500 0 1 0 1.500 6l4 1.500A9.800 9.800 0 1 1 17 6z" fill="#2fae1e" stroke="#157010" stroke-width="1"/></svg>
<div class="a" style="left:439px;top:320px;width:1px;height:20px;background:#95979f"></div><div class="a" style="left:440px;top:320px;width:1px;height:20px;background:#bbbdc3"></div>
<svg class="a" style="left:447px;top:321px" width="22" height="17" viewBox="0 0 22 17"><rect x=".5" y=".5" width="21" height="16" fill="#fff" stroke="#6a6a6a"/><rect x="2" y="2" width="18" height="13" fill="#2a6fd8"/><ellipse cx="10" cy="7" rx="4.500" ry="5" fill="#c02850"/><ellipse cx="13" cy="6" rx="2.500" ry="3.500" fill="#f0c020"/><path d="M2 13l6-3 5 2 7-3v6H2z" fill="#3a5aa8"/></svg>
<svg class="a" style="left:478px;top:319px" width="24" height="24" viewBox="0 0 24 24"><path d="M12 11.500l9 9" stroke="#b4b4b4" stroke-width="3.500" stroke-linecap="round"/><circle cx="9" cy="8.500" r="6.500" fill="#cfe2fa" stroke="#7a9cc8" stroke-width="1.500"/><rect x="5.500" y="7.200" width="7" height="2.600" rx=".6" fill="#1f5fc0"/></svg>
<div class="a" style="left:513px;top:329px;width:23px;height:1px;background:#8b8e96"></div><div class="a" style="left:513px;top:330px;width:23px;height:1px;background:#c4c6cb"></div>
<div class="a" style="left:508px;top:321px;width:10px;height:18px;border-radius:4px;background:linear-gradient(90deg,#dcdde1,#c2c4ca);box-shadow:0 1px 1px rgba(0,0,0,.35),inset 0 0 0 1px #a9abb2"></div>
<svg class="a" style="left:545px;top:319px" width="24" height="24" viewBox="0 0 24 24"><path d="M12 11.500l9 9" stroke="#b4b4b4" stroke-width="3.500" stroke-linecap="round"/><circle cx="9" cy="8.500" r="6.500" fill="#cfe2fa" stroke="#7a9cc8" stroke-width="1.500"/><path d="M5.500 7.200h2.200V5h2.600v2.200h2.200v2.600h-2.200V12H7.700V9.800H5.500z" fill="#1f5fc0"/></svg>
<div class="a" style="left:576px;top:320px;width:1px;height:20px;background:#95979f"></div><div class="a" style="left:577px;top:320px;width:1px;height:20px;background:#bbbdc3"></div>
<svg class="a" style="left:584px;top:325px" width="8" height="10" viewBox="0 0 8 10"><path d="M2.500 2l3 3-3 3" stroke="#222" stroke-width="1.200" fill="none"/></svg>
<!-- PATH COMBO -->
<div class="a" style="left:315px;top:351px;width:258px;height:18px;border-radius:4px;background:linear-gradient(#e4e5e8,#f6f6f7 30%,#f2f2f3);box-shadow:0 0 0 1px #9fa2aa,0 1px 0 1px #c4c6cb"></div>
<svg class="a" style="left:318px;top:352px" width="17" height="16" viewBox="0 0 17 16"><path d="M1 2.500h6l1.500 2H16v3H1z" fill="#5a94dc"/><path d="M.5 5h16v9a1 1 0 0 1-1 1h-14a1 1 0 0 1-1-1z" fill="url(#sf)" stroke="#3a70c0" stroke-width=".6"/></svg>
<div class="a" style="left:339px;top:353px;white-space:nowrap;font-size:12.3px">/home/david96/Documents/</div>
<svg class="a" style="left:537px;top:354px" width="16" height="12" viewBox="0 0 16 12"><path d="M5.500 .5h10v11h-10L.5 6z" fill="#1a1a1a"/><path d="M7.500 3.500l5 5M12.500 3.500l-5 5" stroke="#fff" stroke-width="1.600"/></svg>
<svg class="a" style="left:559px;top:356px" width="10" height="8" viewBox="0 0 10 8"><path d="M1.500 2l3.500 3.500L8.500 2" stroke="#1a1a1a" stroke-width="1.500" fill="none"/></svg>
<svg class="a" style="left:579px;top:352px" width="16" height="16" viewBox="0 0 16 16"><path d="M1.500 8l2-2 3 3 6.500-6.500 2 2L6.500 13z" fill="#5a8ac0" stroke="#2a4a7a" stroke-width="1"/></svg>
<!-- FILE LIST -->
<div class="a view" style="left:313px;top:375px;width:283px;height:562px;overflow:hidden">
<div class="a" style="left:0;top:0;width:283px;height:21px;background:linear-gradient(#b5b7bf,#bcbec5);border-bottom:1px solid #dcdde0"></div>
<div class="a" style="left:3px;top:3px;color:#14143a">Nom</div>
<div class="row" style="top:21px"><svg class="a" style="left:2px;top:3px" width="17" height="14" viewBox="0 0 17 14"><path d="M1 1h6l1.500 2H16v3H1z" fill="#5a94dc"/><path d="M.5 3.500h16v9a1 1 0 0 1-1 1h-14a1 1 0 0 1-1-1z" fill="url(#sf)" stroke="#3a70c0" stroke-width=".6"/><path d="M1 5h15" stroke="#d4e8ff" stroke-width="1"/></svg><span style="position:absolute;left:23px;top:0">Mes vidéos</span></div>
<div class="row" style="top:41px"><svg class="a" style="left:2px;top:3px" width="17" height="14" viewBox="0 0 17 14"><path d="M1 1h6l1.500 2H16v3H1z" fill="#5a94dc"/><path d="M.5 3.500h16v9a1 1 0 0 1-1 1h-14a1 1 0 0 1-1-1z" fill="url(#sf)" stroke="#3a70c0" stroke-width=".6"/><path d="M1 5h15" stroke="#d4e8ff" stroke-width="1"/></svg><span style="position:absolute;left:23px;top:0">Mes images</span></div>
<div class="row" style="top:61px"><svg class="a" style="left:2px;top:3px" width="17" height="14" viewBox="0 0 17 14"><path d="M1 1h6l1.500 2H16v3H1z" fill="#5a94dc"/><path d="M.5 3.500h16v9a1 1 0 0 1-1 1h-14a1 1 0 0 1-1-1z" fill="url(#sf)" stroke="#3a70c0" stroke-width=".6"/><path d="M1 5h15" stroke="#d4e8ff" stroke-width="1"/></svg><span style="position:absolute;left:23px;top:0">Mes documents</span></div>
<div class="row" style="top:81px"><svg class="a" style="left:2px;top:3px" width="17" height="14" viewBox="0 0 17 14"><path d="M1 1h6l1.500 2H16v3H1z" fill="#5a94dc"/><path d="M.5 3.500h16v9a1 1 0 0 1-1 1h-14a1 1 0 0 1-1-1z" fill="url(#sf)" stroke="#3a70c0" stroke-width=".6"/><path d="M1 5h15" stroke="#d4e8ff" stroke-width="1"/></svg><span style="position:absolute;left:23px;top:0">BotaniculaSaves</span></div>
<div class="row" style="top:101px"><svg class="a" style="left:2px;top:3px" width="17" height="14" viewBox="0 0 17 14"><path d="M1 1h6l1.500 2H16v3H1z" fill="#5a94dc"/><path d="M.5 3.500h16v9a1 1 0 0 1-1 1h-14a1 1 0 0 1-1-1z" fill="url(#sf)" stroke="#3a70c0" stroke-width=".6"/><path d="M1 5h15" stroke="#d4e8ff" stroke-width="1"/></svg><span style="position:absolute;left:23px;top:0">Profiles</span></div>
<div class="row" style="top:121px"><svg class="a" style="left:2px;top:3px" width="17" height="14" viewBox="0 0 17 14"><path d="M1 1h6l1.500 2H16v3H1z" fill="#5a94dc"/><path d="M.5 3.500h16v9a1 1 0 0 1-1 1h-14a1 1 0 0 1-1-1z" fill="url(#sf)" stroke="#3a70c0" stroke-width=".6"/><path d="M1 5h15" stroke="#d4e8ff" stroke-width="1"/></svg><span style="position:absolute;left:23px;top:0">meline-papa_data</span></div>
<div class="row" style="top:141px"><svg class="a" style="left:2px;top:3px" width="17" height="14" viewBox="0 0 17 14"><path d="M1 1h6l1.500 2H16v3H1z" fill="#5a94dc"/><path d="M.5 3.500h16v9a1 1 0 0 1-1 1h-14a1 1 0 0 1-1-1z" fill="url(#sf)" stroke="#3a70c0" stroke-width=".6"/><path d="M1 5h15" stroke="#d4e8ff" stroke-width="1"/></svg><span style="position:absolute;left:23px;top:0">amenagement</span></div>
<div class="row" style="top:161px"><svg class="a" style="left:2px;top:3px" width="17" height="14" viewBox="0 0 17 14"><path d="M1 1h6l1.500 2H16v3H1z" fill="#5a94dc"/><path d="M.5 3.500h16v9a1 1 0 0 1-1 1h-14a1 1 0 0 1-1-1z" fill="url(#sf)" stroke="#3a70c0" stroke-width=".6"/><path d="M1 5h15" stroke="#d4e8ff" stroke-width="1"/></svg><span style="position:absolute;left:23px;top:0">totalvalidatortool</span></div>
<div class="row" style="top:181px"><svg class="a" style="left:2px;top:3px" width="17" height="14" viewBox="0 0 17 14"><path d="M1 1h6l1.500 2H16v3H1z" fill="#5a94dc"/><path d="M.5 3.500h16v9a1 1 0 0 1-1 1h-14a1 1 0 0 1-1-1z" fill="url(#sf)" stroke="#3a70c0" stroke-width=".6"/><path d="M1 5h15" stroke="#d4e8ff" stroke-width="1"/></svg><span style="position:absolute;left:23px;top:0">Beatbattle2</span></div>
<div class="row" style="top:201px"><svg class="a" style="left:2px;top:3px" width="17" height="14" viewBox="0 0 17 14"><path d="M1 1h6l1.500 2H16v3H1z" fill="#5a94dc"/><path d="M.5 3.500h16v9a1 1 0 0 1-1 1h-14a1 1 0 0 1-1-1z" fill="url(#sf)" stroke="#3a70c0" stroke-width=".6"/><path d="M1 5h15" stroke="#d4e8ff" stroke-width="1"/></svg><span style="position:absolute;left:23px;top:0">Kick Drums</span></div>
<div class="row" style="top:221px"><svg class="a" style="left:2px;top:3px" width="17" height="14" viewBox="0 0 17 14"><path d="M1 1h6l1.500 2H16v3H1z" fill="#5a94dc"/><path d="M.5 3.500h16v9a1 1 0 0 1-1 1h-14a1 1 0 0 1-1-1z" fill="url(#sf)" stroke="#3a70c0" stroke-width=".6"/><path d="M1 5h15" stroke="#d4e8ff" stroke-width="1"/></svg><span style="position:absolute;left:23px;top:0">Hi-Hats</span></div>
<div class="row" style="top:241px"><svg class="a" style="left:2px;top:3px" width="17" height="14" viewBox="0 0 17 14"><path d="M1 1h6l1.500 2H16v3H1z" fill="#5a94dc"/><path d="M.5 3.500h16v9a1 1 0 0 1-1 1h-14a1 1 0 0 1-1-1z" fill="url(#sf)" stroke="#3a70c0" stroke-width=".6"/><path d="M1 5h15" stroke="#d4e8ff" stroke-width="1"/></svg><span style="position:absolute;left:23px;top:0">Snare Drums</span></div>
<div class="row" style="top:261px"><svg class="a" style="left:2px;top:3px" width="17" height="14" viewBox="0 0 17 14"><path d="M1 1h6l1.500 2H16v3H1z" fill="#5a94dc"/><path d="M.5 3.500h16v9a1 1 0 0 1-1 1h-14a1 1 0 0 1-1-1z" fill="url(#sf)" stroke="#3a70c0" stroke-width=".6"/><path d="M1 5h15" stroke="#d4e8ff" stroke-width="1"/></svg><span style="position:absolute;left:23px;top:0">Acoustic guitar single notes</span></div>
<div class="row" style="top:281px"><svg class="a" style="left:2px;top:3px" width="17" height="14" viewBox="0 0 17 14"><path d="M1 1h6l1.500 2H16v3H1z" fill="#5a94dc"/><path d="M.5 3.500h16v9a1 1 0 0 1-1 1h-14a1 1 0 0 1-1-1z" fill="url(#sf)" stroke="#3a70c0" stroke-width=".6"/><path d="M1 5h15" stroke="#d4e8ff" stroke-width="1"/></svg><span style="position:absolute;left:23px;top:0">ashGrunge</span></div>
<div class="row" style="top:301px"><svg class="a" style="left:2px;top:3px" width="17" height="14" viewBox="0 0 17 14"><path d="M1 1h6l1.500 2H16v3H1z" fill="#5a94dc"/><path d="M.5 3.500h16v9a1 1 0 0 1-1 1h-14a1 1 0 0 1-1-1z" fill="url(#sf)" stroke="#3a70c0" stroke-width=".6"/><path d="M1 5h15" stroke="#d4e8ff" stroke-width="1"/></svg><span style="position:absolute;left:23px;top:0">Livres</span></div>
<div class="row" style="top:321px"><svg class="a" style="left:2px;top:3px" width="17" height="14" viewBox="0 0 17 14"><path d="M1 1h6l1.500 2H16v3H1z" fill="#5a94dc"/><path d="M.5 3.500h16v9a1 1 0 0 1-1 1h-14a1 1 0 0 1-1-1z" fill="url(#sf)" stroke="#3a70c0" stroke-width=".6"/><path d="M1 5h15" stroke="#d4e8ff" stroke-width="1"/></svg><span style="position:absolute;left:23px;top:0">movie</span></div>
<div class="row" style="top:341px"><svg class="a" style="left:3px;top:2px" width="14" height="17" viewBox="0 0 14 17"><path d="M.5 .5h10l3 3v13H.5z" fill="#f8f8f8" stroke="#8c8c8c"/><path d="M4 12V5h4v7" stroke="#2f9e1e" stroke-width="1.300" fill="none"/><circle cx="3.500" cy="12" r="1.300" fill="#2f9e1e"/><circle cx="7.500" cy="12" r="1.300" fill="#2f9e1e"/><path d="M10.500 .5v3h3" fill="#ddd" stroke="#8c8c8c" stroke-width=".8"/></svg><span style="position:absolute;left:23px;top:0">clara-obelix-enveloppe.wav</span></div>
<div class="row" style="top:361px"><svg class="a" style="left:3px;top:2px" width="14" height="17" viewBox="0 0 14 17"><path d="M.5 .5h10l3 3v13H.5z" fill="#f8f8f8" stroke="#8c8c8c"/><path d="M4 12V5h4v7" stroke="#2f9e1e" stroke-width="1.300" fill="none"/><circle cx="3.500" cy="12" r="1.300" fill="#2f9e1e"/><circle cx="7.500" cy="12" r="1.300" fill="#2f9e1e"/><path d="M10.500 .5v3h3" fill="#ddd" stroke="#8c8c8c" stroke-width=".8"/></svg><span style="position:absolute;left:23px;top:0">clara-obelix.wav</span></div>
<div class="row" style="top:381px"><svg class="a" style="left:3px;top:2px" width="14" height="17" viewBox="0 0 14 17"><path d="M.5 .5h10l3 3v13H.5z" fill="#f8f8f8" stroke="#8c8c8c"/><path d="M4 12V5h4v7" stroke="#2f9e1e" stroke-width="1.300" fill="none"/><circle cx="3.500" cy="12" r="1.300" fill="#2f9e1e"/><circle cx="7.500" cy="12" r="1.300" fill="#2f9e1e"/><path d="M10.500 .5v3h3" fill="#ddd" stroke="#8c8c8c" stroke-width=".8"/></svg><span style="position:absolute;left:23px;top:0">clara-bisous.wav</span></div>
<div class="row" style="top:401px"><svg class="a" style="left:3px;top:2px" width="14" height="17" viewBox="0 0 14 17"><path d="M.5 .5h10l3 3v13H.5z" fill="#f8f8f8" stroke="#8c8c8c"/><path d="M4 12V5h4v7" stroke="#2f9e1e" stroke-width="1.300" fill="none"/><circle cx="3.500" cy="12" r="1.300" fill="#2f9e1e"/><circle cx="7.500" cy="12" r="1.300" fill="#2f9e1e"/><path d="M10.500 .5v3h3" fill="#ddd" stroke="#8c8c8c" stroke-width=".8"/></svg><span style="position:absolute;left:23px;top:0">clara-rigole.wav</span></div>
<div class="row" style="top:421px"><svg class="a" style="left:3px;top:2px" width="14" height="17" viewBox="0 0 14 17"><path d="M.5 .5h10l3 3v13H.5z" fill="#f8f8f8" stroke="#8c8c8c"/><path d="M4 12V5h4v7" stroke="#2f9e1e" stroke-width="1.300" fill="none"/><circle cx="3.500" cy="12" r="1.300" fill="#2f9e1e"/><circle cx="7.500" cy="12" r="1.300" fill="#2f9e1e"/><path d="M10.500 .5v3h3" fill="#ddd" stroke="#8c8c8c" stroke-width=".8"/></svg><span style="position:absolute;left:23px;top:0">clara-artiste.wav</span></div>
<div class="row" style="top:441px"><svg class="a" style="left:3px;top:2px" width="14" height="17" viewBox="0 0 14 17"><path d="M.5 .5h10l3 3v13H.5z" fill="#f8f8f8" stroke="#8c8c8c"/><path d="M4 12V5h4v7" stroke="#2f9e1e" stroke-width="1.300" fill="none"/><circle cx="3.500" cy="12" r="1.300" fill="#2f9e1e"/><circle cx="7.500" cy="12" r="1.300" fill="#2f9e1e"/><path d="M10.500 .5v3h3" fill="#ddd" stroke="#8c8c8c" stroke-width=".8"/></svg><span style="position:absolute;left:23px;top:0">clara.wav</span></div>
<div class="row" style="top:461px"><svg class="a" style="left:3px;top:2px" width="14" height="17" viewBox="0 0 14 17"><path d="M.5 .5h10l3 3v13H.5z" fill="#f8f8f8" stroke="#8c8c8c"/><path d="M6.500 12V4.500c1 2 3 2 3 4.500" stroke="#2f9e1e" stroke-width="1.200" fill="none"/><ellipse cx="5.200" cy="12.200" rx="1.700" ry="1.400" fill="#2f9e1e"/><path d="M10.500 .5v3h3" fill="#ddd" stroke="#8c8c8c" stroke-width=".8"/></svg><span style="position:absolute;left:23px;top:0">Noir Désir - Ces Gens Là (Beezik remercie Carrefour)</span></div>
<div class="row" style="top:481px"><svg class="a" style="left:3px;top:2px" width="14" height="17" viewBox="0 0 14 17"><path d="M.5 .5h10l3 3v13H.5z" fill="#f8f8f8" stroke="#8c8c8c"/><path d="M6.500 12V4.500c1 2 3 2 3 4.500" stroke="#2f9e1e" stroke-width="1.200" fill="none"/><ellipse cx="5.200" cy="12.200" rx="1.700" ry="1.400" fill="#2f9e1e"/><path d="M10.500 .5v3h3" fill="#ddd" stroke="#8c8c8c" stroke-width=".8"/></svg><span style="position:absolute;left:23px;top:0">Paul Dianno - Shoot, Shoot (Beezik remercie)</span></div>
<div class="row" style="top:501px"><svg class="a" style="left:3px;top:2px" width="14" height="17" viewBox="0 0 14 17"><path d="M.5 .5h10l3 3v13H.5z" fill="#f8f8f8" stroke="#8c8c8c"/><path d="M6.500 12V4.500c1 2 3 2 3 4.500" stroke="#2f9e1e" stroke-width="1.200" fill="none"/><ellipse cx="5.200" cy="12.200" rx="1.700" ry="1.400" fill="#2f9e1e"/><path d="M10.500 .5v3h3" fill="#ddd" stroke="#8c8c8c" stroke-width=".8"/></svg><span style="position:absolute;left:23px;top:0">Paul Dianno - Kashmir (Beezik remercie Carrefour)</span></div>
<div class="row" style="top:521px"><svg class="a" style="left:3px;top:2px" width="14" height="17" viewBox="0 0 14 17"><path d="M.5 .5h10l3 3v13H.5z" fill="#f8f8f8" stroke="#8c8c8c"/><path d="M6.500 12V4.500c1 2 3 2 3 4.500" stroke="#2f9e1e" stroke-width="1.200" fill="none"/><ellipse cx="5.200" cy="12.200" rx="1.700" ry="1.400" fill="#2f9e1e"/><path d="M10.500 .5v3h3" fill="#ddd" stroke="#8c8c8c" stroke-width=".8"/></svg><span style="position:absolute;left:23px;top:0">Iron Maiden - Strange World (1998 Digital Remaster)</span></div>
<div class="row" style="top:541px"><svg class="a" style="left:3px;top:2px" width="14" height="17" viewBox="0 0 14 17"><path d="M.5 .5h10l3 3v13H.5z" fill="#f8f8f8" stroke="#8c8c8c"/><path d="M6.500 12V4.500c1 2 3 2 3 4.500" stroke="#2f9e1e" stroke-width="1.200" fill="none"/><ellipse cx="5.200" cy="12.200" rx="1.700" ry="1.400" fill="#2f9e1e"/><path d="M10.500 .5v3h3" fill="#ddd" stroke="#8c8c8c" stroke-width=".8"/></svg><span style="position:absolute;left:23px;top:0">ARYX.S3M</span></div>

</div>
<!-- HSCROLL -->
<svg class="a" style="left:315px;top:944px" width="8" height="10" viewBox="0 0 8 10"><path d="M5.500 1.500L2 5l3.500 3.500" stroke="#222" stroke-width="1.200" fill="none"/></svg>
<div class="a" style="left:326px;top:942px;width:241px;height:14px;border-radius:3px;background:#9b9ea7;box-shadow:inset 0 1px 1px rgba(0,0,0,.25),0 1px 0 rgba(255,255,255,.3)"></div>
<div class="a" style="left:327px;top:943px;width:80px;height:12px;border-radius:3px;background:linear-gradient(90deg,#d8d9dd,#b4b6bd 50%,#d4d5d9);box-shadow:inset 0 0 0 1px rgba(255,255,255,.4)"></div>
<svg class="a" style="left:572px;top:944px" width="8" height="10" viewBox="0 0 8 10"><path d="M5.500 1.500L2 5l3.500 3.500" stroke="#222" stroke-width="1.200" fill="none"/></svg>
<svg class="a" style="left:585px;top:944px" width="8" height="10" viewBox="0 0 8 10"><path d="M2.500 1.500L6 5 2.500 8.500" stroke="#222" stroke-width="1.200" fill="none"/></svg>
<!-- NAME / FILTER -->
<div class="a" style="left:271px;top:967px;white-space:nowrap"><u>N</u>om :</div>
<div class="a" style="left:316px;top:966px;width:276px;height:17px;border-radius:4px;background:#f4f4f5;box-shadow:0 0 0 1.500px #1f2c5c"></div>
<svg class="a" style="left:579px;top:971px" width="10" height="8" viewBox="0 0 10 8"><path d="M1.500 2l3.500 3.500L8.500 2" stroke="#1a1a1a" stroke-width="1.500" fill="none"/></svg>
<div class="a" style="left:269px;top:997px;white-space:nowrap">F<u>i</u>ltre :</div>
<div class="a" style="left:316px;top:996px;width:277px;height:17px;border-radius:4px;background:linear-gradient(#e4e5e8,#f6f6f7 30%,#f2f2f3);box-shadow:0 0 0 1px #9fa2aa,0 1px 0 1px #c4c6cb"></div>
<div class="a" style="left:320px;top:997px;white-space:nowrap;font-size:12.38px">Fichiers multimédia pris en charge</div>
<svg class="a" style="left:557px;top:999px" width="16" height="12" viewBox="0 0 16 12"><path d="M5.500 .5h10v11h-10L.5 6z" fill="#1a1a1a"/><path d="M7.500 3.500l5 5M12.500 3.500l-5 5" stroke="#fff" stroke-width="1.600"/></svg>
<svg class="a" style="left:579px;top:1001px" width="10" height="8" viewBox="0 0 10 8"><path d="M1.500 2l3.500 3.500L8.500 2" stroke="#1a1a1a" stroke-width="1.500" fill="none"/></svg>

<!-- BOTTOM BAR -->
<div class="a" style="left:7px;top:1023px;width:19px;height:19px;border-radius:50%;background:radial-gradient(circle at 50% 35%,#fafafa,#e2e3e6 65%,#c9cbd0);box-shadow:0 0 0 1.500px #3e3e42,0 2px 2px rgba(0,0,0,.35)"></div>
<div class="a" style="left:33px;top:1019px;width:28px;height:27px;border-radius:3px;border:1px solid #5a6a9a;box-sizing:border-box;background:rgba(255,255,255,.08)"></div>
<div class="a" style="left:38px;top:1023px;width:19px;height:19px;border-radius:50%;background:radial-gradient(circle at 50% 35%,#fafafa,#e6e7ea 65%,#d2d4d8);box-shadow:0 0 0 1.500px #b4b6bd,0 1px 2px rgba(0,0,0,.2)"></div>
<div class="a" style="left:69px;top:1023px;width:19px;height:19px;border-radius:50%;background:radial-gradient(circle at 50% 35%,#fafafa,#e2e3e6 65%,#c9cbd0);box-shadow:0 0 0 1.500px #3e3e42,0 2px 2px rgba(0,0,0,.35)"></div>
<div class="a" style="left:99px;top:1023px;width:19px;height:19px;border-radius:50%;background:radial-gradient(circle at 50% 35%,#fafafa,#e2e3e6 65%,#c9cbd0);box-shadow:0 0 0 1.500px #3e3e42,0 2px 2px rgba(0,0,0,.35)"></div>
<svg class="a" style="left:0;top:1018px" width="125" height="30" viewBox="0 0 125 30"><g fill="#1a1a1a"><rect x="11" y="10" width="2.200" height="9"/><path d="M21 10v9l-7-4.500z"/><rect x="43.500" y="10.500" width="2.500" height="8" fill="#6a6a6e"/><rect x="49" y="10.500" width="2.500" height="8" fill="#6a6a6e"/><rect x="74" y="10.500" width="9" height="8.500" rx=".8"/><path d="M103 10v9l7-4.500z"/><rect x="110.800" y="10" width="2.200" height="9"/></g></svg>
<div class="a" style="left:128px;top:1023px;width:64px;height:18px;border-radius:4px;background:linear-gradient(#d0d1d6,#b7b9c0);box-shadow:0 0 0 1px #92959d,0 2px 1px rgba(0,0,0,.2)"></div>
<div class="a" style="left:131px;top:1025px;color:#14143a">fra</div>
<svg class="a" style="left:176px;top:1029px" width="10" height="8" viewBox="0 0 10 8"><path d="M1.500 2l3.500 3.500L8.500 2" stroke="#1a1a1a" stroke-width="1.500" fill="none"/></svg>
<div class="a" style="left:199px;top:1023px;width:78px;height:18px;border-radius:4px;background:linear-gradient(#d0d1d6,#b7b9c0);box-shadow:0 0 0 1px #92959d,0 2px 1px rgba(0,0,0,.2)"></div>
<div class="a" style="left:202px;top:1025px;color:#14143a">désactivé</div>
<svg class="a" style="left:264px;top:1029px" width="10" height="8" viewBox="0 0 10 8"><path d="M1.500 2l3.500 3.500L8.500 2" stroke="#1a1a1a" stroke-width="1.500" fill="none"/></svg>
<svg class="a" style="left:285px;top:1021px" width="24" height="24" viewBox="0 0 24 24"><path d="M2 8.500h4l7-6.500v20l-7-6.500H2z" fill="#ececec" stroke="#8a8a8a" stroke-width="1"/><rect x="2" y="8.500" width="3.500" height="7" fill="#f0b030"/><path d="M16 8.500c1.500 2 1.500 5 0 7" stroke="#58c038" stroke-width="1.300" fill="none"/></svg>
<div class="a" style="left:318px;top:1031px;width:73px;height:1px;background:#8b8e96"></div><div class="a" style="left:318px;top:1032px;width:73px;height:1px;background:#c0c2c8"></div>
<div class="a" style="left:374px;top:1023px;width:10px;height:19px;border-radius:4px;background:linear-gradient(90deg,#dcdde1,#c2c4ca);box-shadow:0 1px 1px rgba(0,0,0,.35),inset 0 0 0 1px #a9abb2"></div>
<svg class="a" style="left:401px;top:1020px" width="25" height="25" viewBox="0 0 25 25"><circle cx="11" cy="13" r="9.500" fill="#bcbec4" stroke="#9a9ca4" stroke-width="1.200"/><path d="M11 7v6l4 3" stroke="#d8d9dd" stroke-width="1.500" fill="none"/><path d="M14 2l5 1-1 4" stroke="#a8aab0" stroke-width="1.500" fill="none"/><circle cx="17.500" cy="18" r="5" fill="#c8cace" stroke="#9a9ca4"/><path d="M16 15.500v5l4-2.500z" fill="#eee"/></svg>
<div class="a" style="left:436px;top:1031px;width:1145px;height:1px;background:#8b8e96"></div><div class="a" style="left:436px;top:1032px;width:1145px;height:1px;background:#c0c2c8"></div>
<div class="a" style="left:432px;top:1023px;width:10px;height:19px;border-radius:4px;background:linear-gradient(90deg,#dcdde1,#c2c4ca);box-shadow:0 1px 1px rgba(0,0,0,.35),inset 0 0 0 1px #a9abb2"></div>
<div class="a" style="left:1591px;top:1025px;width:84px;height:17px;border-radius:4px;background:linear-gradient(#d2d3d8,#b9bbc2);box-shadow:0 0 0 1px #92959d,0 2px 1px rgba(0,0,0,.2);text-align:center;color:#14143a;line-height:17px;padding-left:5px;box-sizing:border-box">00:00:00</div>
<!-- VIDEO -->
<div class="a" style="left:600px;top:314px;width:1080px;height:703px;background:#000"></div>
<!--VIDSTART--><svg id="vid" class="a" style="left:608px;top:365px" width="1060" height="598" viewBox="608 365 1060 598">
<defs>
<filter id="b30" x="-50%" y="-50%" width="200%" height="200%"><feGaussianBlur stdDeviation="30"/></filter>
<filter id="b14" x="-50%" y="-50%" width="200%" height="200%"><feGaussianBlur stdDeviation="14"/></filter>
<filter id="b6" x="-50%" y="-50%" width="200%" height="200%"><feGaussianBlur stdDeviation="6"/></filter>
<filter id="b3" x="-50%" y="-50%" width="200%" height="200%"><feGaussianBlur stdDeviation="3"/></filter>
<filter id="b1" x="-20%" y="-20%" width="140%" height="140%"><feGaussianBlur stdDeviation="1.200"/></filter>
<filter id="b05" x="-5%" y="-5%" width="110%" height="110%"><feGaussianBlur stdDeviation=".7"/></filter>
<radialGradient id="sph" gradientUnits="userSpaceOnUse" cx="760" cy="600" r="400">
<stop offset="0" stop-color="#b8aaae"/><stop offset=".15" stop-color="#9c8e92"/><stop offset=".35" stop-color="#887a7e"/><stop offset=".55" stop-color="#7c6e72"/><stop offset=".75" stop-color="#8c7c7e"/><stop offset=".92" stop-color="#a89496"/><stop offset="1" stop-color="#b09698"/></radialGradient>
<linearGradient id="suit" gradientUnits="userSpaceOnUse" x1="750" y1="800" x2="1390" y2="900">
<stop offset="0" stop-color="#3b3a44"/><stop offset=".3" stop-color="#383943"/><stop offset=".7" stop-color="#3a3a46"/><stop offset="1" stop-color="#473f53"/></linearGradient>
<linearGradient id="skin" gradientUnits="userSpaceOnUse" x1="950" y1="460" x2="1100" y2="740">
<stop offset="0" stop-color="#cfa791"/><stop offset=".45" stop-color="#c8987f"/><stop offset=".8" stop-color="#b4846e"/><stop offset="1" stop-color="#9a7060"/></linearGradient>
<linearGradient id="hair" gradientUnits="userSpaceOnUse" x1="900" y1="420" x2="960" y2="680">
<stop offset="0" stop-color="#525254"/><stop offset=".4" stop-color="#333132"/><stop offset="1" stop-color="#272424"/></linearGradient>
<clipPath id="suitclip"><path d="M946 706L920 740L891 760L844 789L793 821L767 837L754 853L751 885L749 917L747 965L1391 965L1381 917L1371 869L1359 821L1339 773L1326 745L1307 739L1269 729L1204 716L1140 701L1126 690L1100 730L1000 760Z"/></clipPath><clipPath id="faceclip"><path d="M954 622L957 606L954 583L959 560L954 537L943 514L946 494L960 483L983 476L1011 467L1040 457L1074 453L1089 474L1103 503L1111 526L1117 549L1121 577L1126 603L1123 623L1119 630L1122 646L1123 657L1116 670L1124 686L1124 712L1112 730L1090 739L1060 745L1020 738L985 718L955 690L949 657Z"/></clipPath><clipPath id="vclip"><rect x="608" y="365" width="1060" height="598"/></clipPath>
</defs>
<g clip-path="url(#vclip)">
<rect x="608" y="365" width="1060" height="598" fill="#fff"/>
<!-- sphere -->
<g filter="url(#b14)">
<circle cx="670" cy="640" r="426" fill="#efd6d6"/>
<circle cx="670" cy="640" r="400" fill="url(#sph)"/>
</g>
<g filter="url(#b30)">
<ellipse cx="760" cy="368" rx="300" ry="22" fill="#baa6a6" opacity=".7"/><ellipse cx="760" cy="475" rx="170" ry="40" fill="#55494d" opacity=".6"/>
<path d="M600 540C640 420 820 400 960 490" stroke="#5e5054" stroke-width="60" fill="none" opacity=".5"/>
<ellipse cx="758" cy="595" rx="100" ry="40" fill="#c0b2be" opacity=".4"/><ellipse cx="758" cy="588" rx="42" ry="32" fill="#fbf4f6"/>
<ellipse cx="720" cy="750" rx="170" ry="60" fill="#c26262" opacity=".9"/><ellipse cx="740" cy="820" rx="200" ry="35" fill="#a06662" opacity=".7"/>
<ellipse cx="850" cy="780" rx="120" ry="70" fill="#c88888" opacity=".8"/>
<ellipse cx="680" cy="900" rx="170" ry="70" fill="#957970"/>
<ellipse cx="640" cy="965" rx="90" ry="25" fill="#a8605a" opacity=".7"/>
<ellipse cx="860" cy="660" rx="40" ry="30" fill="#7a78b0" opacity=".5"/>
</g>
<circle cx="670" cy="640" r="364" fill="none" stroke="#c06464" stroke-width="7" opacity=".5" filter="url(#b3)"/>
<!-- bokeh -->
<g filter="url(#b1)" fill="#fff0d0">
<circle cx="682" cy="384" r="4"/><circle cx="734" cy="386" r="4.500"/><circle cx="706" cy="405" r="4"/><circle cx="745" cy="399" r="3.500" opacity=".8"/><circle cx="782" cy="400" r="3.500" opacity=".8"/><circle cx="816" cy="409" r="4.500"/><circle cx="647" cy="431" r="4.500" opacity=".8"/><circle cx="626" cy="451" r="3.500" opacity=".8"/><circle cx="897" cy="443" r="4.500"/><circle cx="841" cy="512" r="3.500"/><circle cx="848" cy="525" r="3.500"/><circle cx="709" cy="493" r="3" opacity=".6"/><circle cx="701" cy="582" r="5.500"/><circle cx="758" cy="590" r="6.500"/><circle cx="811" cy="584" r="5.500"/><circle cx="777" cy="577" r="3.500" opacity=".8"/><circle cx="691" cy="775" r="4" fill="#ffe8c8"/><circle cx="674" cy="421" r="3" opacity=".6"/><circle cx="846" cy="420" r="3" opacity=".5"/>
</g>
<ellipse cx="687" cy="890" rx="6" ry="4" fill="#f0403c" filter="url(#b1)"/>
<path d="M610 925C640 945 670 955 700 962" stroke="#e05850" stroke-width="5" stroke-dasharray="3 3" fill="none" opacity=".8" filter="url(#b1)"/>
<!-- PERSON -->
<g filter="url(#b05)">
<path d="M946 706L920 740L891 760L844 789L793 821L767 837L754 853L751 885L749 917L747 965L1391 965L1381 917L1371 869L1359 821L1339 773L1326 745L1307 739L1269 729L1204 716L1140 701L1126 690L1100 730L1000 760Z" fill="url(#suit)"/>
<path d="M1326 745L1339 773L1359 821L1371 869L1381 917L1391 965L1350 965L1335 860L1318 790L1308 745Z" fill="#4b4159" opacity=".7"/>
<path d="M946 706L920 740L936 760L958 768L930 790L1075 965L1040 965L1028 885L1000 817L977 771Z" fill="#31323c"/>
<path d="M1126 690L1140 701L1165 728L1150 765L1175 785L1100 965L1085 965L1092 846L1097 777L1108 735Z" fill="#30313b"/>
<g clip-path="url(#suitclip)"><path d="M920 740L891 760L844 789L793 821L767 837L757 850L800 850L860 815L915 775Z" fill="#555763" opacity=".7" filter="url(#b3)"/></g>
<g clip-path="url(#suitclip)"><path d="M1150 708L1204 720L1269 733L1307 743L1322 750L1318 775L1260 760L1200 750L1160 745Z" fill="#5a5b6c" opacity=".65" filter="url(#b6)"/></g>
<path d="M1308 745L1318 790L1335 860L1350 965" stroke="#2c2a36" stroke-width="2" fill="none" opacity=".7" filter="url(#b1)"/>
<!-- shirt -->
<path d="M947 709L977 771L1000 817L1023 869L1034 900L1060 965L1082 965L1088 900L1092 846L1097 777L1110 728L1000 700Z" fill="#bcc0d2"/>
<path d="M949 714L1000 797L1030 830L1010 800L975 745Z" fill="#d4d7e4"/>
<path d="M1000 797L1012 836L1040 852L1060 850L1057 843L1034 829Z" fill="#8f94ab"/>
<path d="M1091 760L1063 823L1060 850L1075 845L1093 790Z" fill="#a4a8bd"/>
<!-- neck -->
<path d="M950 650L950 690L969 737L1000 794L1034 829L1057 843L1063 823L1080 786L1091 760L1103 734L1110 700Z" fill="#ad826d"/>
<path d="M950 688L985 722L1030 747L1075 750L1104 736L1091 760L1080 786L1068 812L1040 790L1000 760L965 728Z" fill="#8a6654" opacity=".8" filter="url(#b6)"/>
<!-- hair -->
<path d="M863 520C864 505 868 494 883 471C890 462 900 455 926 437C940 428 960 421 977 419C990 416 1010 416 1029 419C1040 421 1050 427 1069 443L1077 455L1060 472L1000 500L962 560L962 640L947 684L930 685L914 671L906 651L890 620L877 577L869 549Z" fill="url(#hair)"/>
<g stroke="#9a9a9e" stroke-width="2.500" opacity=".55" fill="none" filter="url(#b1)"><path d="M930 442l-14 26M944 434l-12 28M958 429l-10 28M972 425l-8 30M986 423l-6 30M1000 421l-4 30M1014 422l-2 28M1028 424l0 26M1042 428l3 22M1054 434l5 18M912 456l-12 26M898 472l-10 26M884 492l-7 28M876 520l-2 26M925 480l-10 26M940 470l-8 22M905 500l-8 30M892 540l2 28M915 520l-4 30M935 505l-3 26"/></g>
<!-- face -->
<path d="M954 622L957 606L954 583L959 560L954 537L943 514L946 494L960 483L983 476L1011 467L1040 457L1074 453L1089 474L1103 503L1111 526L1117 549L1121 577L1126 603L1123 623L1119 630L1122 646L1123 657L1116 670L1124 686L1124 712L1112 730L1090 739L1060 745L1020 738L985 718L955 690L949 657Z" fill="url(#skin)"/>
<g clip-path="url(#faceclip)"><g filter="url(#b6)">
<ellipse cx="1015" cy="500" rx="50" ry="24" fill="#ddb7a0" opacity=".85"/>
<ellipse cx="1035" cy="620" rx="30" ry="26" fill="#d6a88f" opacity=".7"/>
<path d="M955 560L962 640L975 700L1000 720L985 660L975 600Z" fill="#a87a66" opacity=".6"/>
<path d="M960 680L990 715L1030 738L1080 742L1118 722L1122 690L1100 700L1050 705L1000 690Z" fill="#8e6a5e" opacity=".7"/>
<ellipse cx="1094" cy="640" rx="26" ry="11" fill="#94766e" opacity=".75"/>
<ellipse cx="1098" cy="700" rx="24" ry="18" fill="#9a7468" opacity=".6"/>
<path d="M1098 470L1118 560L1124 600L1112 560L1092 500Z" fill="#a87c68" opacity=".6"/>
<ellipse cx="1032" cy="566" rx="26" ry="13" fill="#8e6250" opacity=".75" transform="rotate(-14 1032 566)"/>
<ellipse cx="1104" cy="556" rx="14" ry="11" fill="#8e6250" opacity=".75"/>
<path d="M1062 560L1068 600L1062 628L1078 630L1076 600L1078 560Z" fill="#a47662" opacity=".7"/>
<path d="M1055 635L1062 665L1058 690L1066 668L1064 638Z" fill="#8e6656" opacity=".7"/>
</g>
<g filter="url(#b3)">
<path d="M1080 556L1088 590L1096 610L1102 604L1094 580L1090 556Z" fill="#e0b8a2" opacity=".8"/>
<ellipse cx="1096" cy="612" rx="9" ry="8" fill="#d8a890" opacity=".8"/>
</g>
</g>
<!-- ear -->
<path d="M886 602L897 593L920 594L934 606L941 630L949 657L934 664L911 657L894 640L884 617Z" fill="#c59680"/>
<path d="M900 606C915 600 926 612 928 630C930 642 934 650 928 652C920 640 916 620 900 612Z" fill="#9a6a5a" filter="url(#b1)"/>
<!-- features -->
<g filter="url(#b1)">
<path d="M996 576C1008 560 1028 548 1051 543L1067 546L1052 552C1030 557 1012 567 999 580Z" fill="#33251f"/>
<path d="M1087 541C1097 535 1108 534 1117 538L1116 544C1106 541 1098 542 1090 546Z" fill="#33251f"/>
<path d="M1015 574C1024 566 1042 564 1052 570C1044 578 1026 580 1015 574Z" fill="#6a4a40"/>
<ellipse cx="1036" cy="571" rx="6" ry="4.500" fill="#241612"/>
<path d="M1094 562C1100 556 1112 556 1117 561C1112 566 1100 567 1094 562Z" fill="#6a4a40"/>
<ellipse cx="1107" cy="560.500" rx="4.500" ry="4" fill="#241612"/>
<path d="M1068 624C1074 631 1088 632 1102 625" stroke="#6e483c" stroke-width="4.500" fill="none" opacity=".85"/>
<path d="M1066 661C1084 656 1100 652 1117 650" stroke="#4a2c2a" stroke-width="4" fill="none"/>
<path d="M1069 664C1085 660 1100 656 1119 654C1121 664 1111 675 1095 676C1082 677 1073 671 1069 664Z" fill="#be8282"/>
<path d="M1076 652C1088 646 1102 645 1116 647L1117 650C1100 652 1086 655 1070 660Z" fill="#a86e68"/>
</g>
<!-- mics -->
<g filter="url(#b1)">
<path d="M992 880C996 874 1006 874 1010 880L1017 915C1016 926 1004 930 998 922Z" fill="#1c1c1e"/>
<path d="M1012 905L1036 898" stroke="#2a2a2e" stroke-width="2.500"/>
<path d="M1104 862C1108 855 1120 856 1123 863L1130 898C1128 908 1114 910 1110 902Z" fill="#1c1c1e"/>
<path d="M1092 896L1112 899" stroke="#2a2a2e" stroke-width="2.500"/>
</g>
<circle cx="1063" cy="882" r="3" fill="#e8eaf2"/>
</g>
</g>
</svg>
<!--VIDEND-->
</body>
</html>
